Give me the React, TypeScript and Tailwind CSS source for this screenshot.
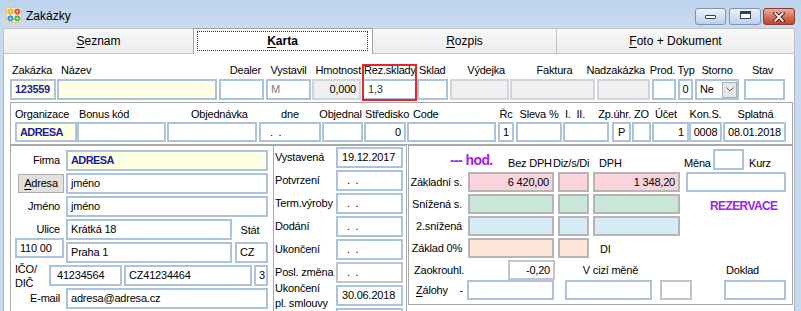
import type { ReactNode } from 'react'

type Tone = 'blue' | 'yellow' | 'gray' | 'plain' | 'pink' | 'green' | 'sky' | 'peach'

const tones: Record<Tone, string> = {
  blue: 'bg-white border-[#adc2db]',
  yellow: 'bg-[#ffffe3] border-[#adc2db]',
  gray: 'bg-[#f0f0f0] border-[#d0d5db]',
  plain: 'bg-white border-[#c4c4c4]',
  pink: 'bg-[#f9d4dd] border-[#b5b5b5]',
  green: 'bg-[#cae6d8] border-[#b5b5b5]',
  sky: 'bg-[#d5ecf7] border-[#b5b5b5]',
  peach: 'bg-[#fde6d7] border-[#b5b5b5]',
}

const Field = ({ tone = 'blue', className = '', children }: { tone?: Tone; className?: string; children?: ReactNode }) => (
  <div className={`flex items-center shrink-0 border-2 px-[3px] overflow-hidden whitespace-nowrap leading-none ${tones[tone]} ${className}`}>
    {children}
  </div>
)

const Col = ({ label, className = '', labelClass = '', children }: { label: ReactNode; className?: string; labelClass?: string; children?: ReactNode }) => (
  <div className={`flex flex-col shrink-0 ${className}`}>
    <div className={`flex h-[13px] leading-[13px] whitespace-nowrap ${labelClass}`}>{label}</div>
    {children}
  </div>
)

const U = ({ children }: { children: ReactNode }) => <span className="underline underline-offset-[2px]">{children}</span>

const AppIcon = () => {
  const gear = (cx: number, cy: number, color: string) => (
    <g>
      <circle cx={cx} cy={cy} r={2.5} fill={color} stroke={color} strokeWidth={1.6} strokeDasharray="1.1 1.1" />
      <circle cx={cx} cy={cy} r={1} fill="#fff" />
    </g>
  )
  return (
    <svg width="16" height="16" viewBox="0 0 16 16" className="ml-[6px] mt-[7px] shrink-0">
      <rect x="0.5" y="0.5" width="15" height="15" rx="1.5" fill="#f6efc4" stroke="#dccf8a" />
      {gear(4.5, 4.6, '#f2a51f')}
      {gear(11.4, 4.6, '#e8432b')}
      {gear(4.5, 11.4, '#2a8de0')}
      {gear(11.4, 11.4, '#3cb54b')}
    </svg>
  )
}

const TitleBar = () => (
  <div className="h-[27px] flex items-start bg-gradient-to-b from-[#bcd2ec] to-[#c9dbf0]">
    <AppIcon />
    <span className="ml-[4px] mt-[8px] text-[12px] leading-[16px]">Zakázky</span>
    <div className="ml-auto mt-[8px] mr-[6px] flex">
      <div className="w-[31px] h-[17px] rounded-[3px] border border-[#7d95b3] bg-gradient-to-b from-[#edf3fa] via-[#d4e1f1] to-[#bed1ea] flex justify-center pt-[6px]">
        <div className="w-[11px] h-[4px] rounded-[1px] border border-[#38414d] bg-white" />
      </div>
      <div className="ml-[3px] w-[32px] h-[17px] rounded-[3px] border border-[#7d95b3] bg-gradient-to-b from-[#edf3fa] via-[#d4e1f1] to-[#bed1ea] flex justify-center pt-[2px]">
        <div className="w-[11px] h-[8px] border border-t-[3px] border-[#38414d] bg-white" />
      </div>
      <div className="ml-[2px] w-[32px] h-[17px] rounded-[3px] border border-[#8a3a2b] bg-gradient-to-b from-[#eab0a2] via-[#d6735d] to-[#c2432c] flex justify-center items-center">
        <svg width="12" height="10" viewBox="0 0 12 10">
          <path d="M2.2 1.2 L9.8 8.8 M9.8 1.2 L2.2 8.8" stroke="#4a1a12" strokeWidth="3.6" strokeLinecap="square" />
          <path d="M2.2 1.2 L9.8 8.8 M9.8 1.2 L2.2 8.8" stroke="#fff" strokeWidth="1.8" strokeLinecap="square" />
        </svg>
      </div>
    </div>
  </div>
)

const Tabs = () => (
  <div className="h-[27px] flex items-end text-[12px]">
    <div className="w-[190px] h-[26px] border-l border-t border-b border-[#c3c3c3] bg-gradient-to-b from-[#f8f8f8] to-[#ececec] flex items-center justify-center">
      <span><U>S</U>eznam</span>
    </div>
    <div className="w-[180px] h-[26px] border-l border-r border-t border-[#a3a3a3] bg-white flex pt-[2px] pl-[3px] pr-[4px] pb-[3px]">
      <div className="flex-1 border border-dotted border-[#333] flex items-center justify-center font-bold">
        <span><U>K</U>arta</span>
      </div>
    </div>
    <div className="w-[183px] h-[26px] border-t border-b border-[#c3c3c3] bg-gradient-to-b from-[#f8f8f8] to-[#ececec] flex items-center justify-center">
      <span><U>R</U>ozpis</span>
    </div>
    <div className="flex-1 h-[26px] border border-[#c3c3c3] bg-gradient-to-b from-[#f8f8f8] to-[#ececec] flex items-center justify-center">
      <span><U>F</U>oto + Dokument</span>
    </div>
  </div>
)

const TopRow = () => (
  <div className="flex pl-[6px] pt-[10px]">
    <Col className="w-[46px]" label="Zakázka" labelClass="pl-[2px]">
      <Field tone="yellow" className="h-[21px] mt-[2px] font-bold text-[#1b1ba6] tracking-[-0.3px]">123559</Field>
    </Col>
    <Col className="w-[160px] ml-px" label="Název" labelClass="pl-[4px]">
      <Field tone="yellow" className="h-[21px] mt-[2px]" />
    </Col>
    <Col className="w-[45px] ml-[2px]" label="Dealer" labelClass="justify-end pr-[3px]">
      <Field className="h-[21px] mt-[2px]" />
    </Col>
    <Col className="w-[45px] ml-[2px]" label="Vystavil" labelClass="justify-center">
      <Field className="h-[21px] mt-[2px] text-[#7a7a7a]">M</Field>
    </Col>
    <Col className="w-[49px] ml-px" label="Hmotnost" labelClass="justify-end">
      <Field tone="gray" className="h-[21px] mt-[2px] justify-end">0,000</Field>
    </Col>
    <div className="relative w-[55px] ml-px shrink-0">
      <Col label="Rez.sklady" labelClass="pl-[2px]">
        <Field className="h-[21px] mt-[2px] text-[#333] pl-[4px]">1,3</Field>
      </Col>
      <div className="absolute inset-0 -bottom-px border-2 border-[#e2282b]" />
    </div>
    <Col className="w-[31px]" label="Sklad" labelClass="pl-[2px]">
      <Field className="h-[21px] mt-[2px]" />
    </Col>
    <Col className="w-[59px] ml-[2px]" label="Výdejka" labelClass="justify-end pr-[4px]">
      <Field tone="gray" className="h-[21px] mt-[2px]" />
    </Col>
    <Col className="w-[85px] ml-px" label="Faktura" labelClass="justify-center pl-[4px]">
      <Field tone="gray" className="h-[21px] mt-[2px]" />
    </Col>
    <Col className="w-[53px] ml-[2px]" label="Nadzakázka" labelClass="justify-end pr-[5px]">
      <Field tone="gray" className="h-[21px] mt-[2px]" />
    </Col>
    <Col className="w-[24px] ml-[2px]" label="Prod." labelClass="justify-center pr-[3px]">
      <Field className="h-[21px] mt-[2px]" />
    </Col>
    <Col className="w-[15px] ml-[2px]" label="Typ" labelClass="justify-center pl-px">
      <Field className="h-[21px] mt-[2px] justify-center px-0">0</Field>
    </Col>
    <Col className="w-[44px] ml-[2px]" label="Storno" labelClass="justify-center">
      <Field className="h-[21px] mt-[2px] pl-[3px] pr-0">
        <span>Ne</span>
        <div className="ml-auto w-[15px] h-[16px] bg-[#e6e6e6] border border-[#adadad] flex items-center justify-center">
          <svg width="8" height="5" viewBox="0 0 8 5">
            <path d="M0.5 0.5 L4 4 L7.5 0.5" fill="none" stroke="#606060" strokeWidth="1" />
          </svg>
        </div>
      </Field>
    </Col>
    <Col className="w-[41px] ml-[5px]" label="Stav" labelClass="justify-center pr-[4px]">
      <Field className="h-[21px] mt-[2px]" />
    </Col>
  </div>
)

const OrderRow = () => (
  <div className="ml-[6px] mt-[2px] w-[783px] h-[43px] border border-[#a9a9a9] flex pl-[4px] pt-[5px]">
    <Col className="w-[62px]" label="Organizace">
      <Field tone="yellow" className="h-[20px] mt-px font-bold text-[#1b1ba6] tracking-[-0.6px]">ADRESA</Field>
    </Col>
    <Col className="w-[89px]" label="Bonus kód" labelClass="pl-[2px]">
      <Field className="h-[20px] mt-px" />
    </Col>
    <Col className="w-[90px] ml-px" label="Objednávka" labelClass="pl-[24px]">
      <Field className="h-[20px] mt-px" />
    </Col>
    <Col className="w-[62px] ml-[2px]" label="dne" labelClass="justify-center">
      <Field className="h-[20px] mt-px pl-[9px] whitespace-pre">.  .</Field>
    </Col>
    <Col className="w-[41px] ml-px" label="Objednal" labelClass="justify-center pr-[4px]">
      <Field className="h-[20px] mt-px" />
    </Col>
    <Col className="w-[42px] ml-px" label="Středisko" labelClass="pl-px">
      <Field className="h-[20px] mt-px justify-end">0</Field>
    </Col>
    <Col className="w-[89px] ml-px" label="Code" labelClass="pl-[6px]">
      <Field className="h-[20px] mt-px" />
    </Col>
    <Col className="w-[16px] ml-[2px]" label="Řc" labelClass="justify-center">
      <Field className="h-[20px] mt-px justify-center px-0">1</Field>
    </Col>
    <Col className="w-[46px] ml-[2px]" label="Sleva %" labelClass="justify-center">
      <Field className="h-[20px] mt-px" />
    </Col>
    <Col className="w-[46px] ml-px" label={<span className="whitespace-pre">I.  II.</span>} labelClass="pl-[2px]">
      <Field className="h-[20px] mt-px" />
    </Col>
    <Col className="w-[19px] ml-[3px]" label="Zp.úhr." labelClass="justify-end">
      <Field className="h-[20px] mt-px justify-center px-0">P</Field>
    </Col>
    <Col className="w-[19px] ml-px" label="ZO" labelClass="justify-center">
      <Field className="h-[20px] mt-px" />
    </Col>
    <Col className="w-[37px] ml-px" label="Účet" labelClass="pl-[3px]">
      <Field className="h-[20px] mt-px justify-end">1</Field>
    </Col>
    <Col className="w-[33px]" label="Kon.S." labelClass="justify-center">
      <Field className="h-[20px] mt-px justify-center px-0">0008</Field>
    </Col>
    <Col className="w-[63px] ml-px" label="Splatná" labelClass="justify-center pl-[2px]">
      <Field className="h-[20px] mt-px justify-center px-0">08.01.2018</Field>
    </Col>
  </div>
)

const Row = ({ className = '', children }: { className?: string; children: ReactNode }) => (
  <div className={`flex items-center h-[21px] mb-[2px] ${className}`}>{children}</div>
)

const CustomerPanel = () => (
  <div className="w-[263px] h-[170px] shrink-0 border-l border-t border-[#a9a9a9] pt-[4px]">
    <Row>
      <div className="w-[52px] text-right pr-[3px]">Firma</div>
      <Field tone="yellow" className="ml-[3px] w-[202px] h-[21px] font-bold text-[#1b1ba6] tracking-[-0.6px]">ADRESA</Field>
    </Row>
    <Row>
      <div className="ml-[7px] w-[46px] h-[19px] bg-[#e1e1e1] border border-[#acacac] flex items-center justify-center">
        <span><U>A</U>dresa</span>
      </div>
      <Field className="ml-[2px] w-[202px] h-[21px]">jméno</Field>
    </Row>
    <Row>
      <div className="w-[52px] text-right pr-[3px]">Jméno</div>
      <Field className="ml-[3px] w-[202px] h-[21px]">jméno</Field>
    </Row>
    <Row>
      <div className="w-[52px] text-right pr-[3px]">Ulice</div>
      <Field className="ml-[3px] w-[166px] h-[21px]">Krátká 18</Field>
      <div className="w-[36px] text-center pt-[2px]">Stát</div>
    </Row>
    <Row className="items-start">
      <Field className="ml-[4px] -mt-[4px] w-[49px] h-[20px]">110 00</Field>
      <Field className="ml-[2px] w-[166px] h-[21px]">Praha 1</Field>
      <Field className="ml-[3px] w-[33px] h-[21px]">CZ</Field>
    </Row>
    <Row>
      <div className="w-[38px] pl-[4px] leading-[14px]">IČO/<br />DIČ</div>
      <Field className="w-[73px] h-[21px] pl-[6px]">41234564</Field>
      <Field className="ml-[2px] w-[128px] h-[21px]">CZ41234464</Field>
      <Field className="ml-[2px] w-[14px] h-[21px] px-[1px]">3</Field>
    </Row>
    <Row>
      <div className="w-[52px] text-right pr-[3px]">E-mail</div>
      <Field className="ml-[3px] w-[202px] h-[21px]">adresa@adresa.cz</Field>
    </Row>
    <Row>
      <Field className="ml-[55px] w-[202px] h-[21px]" />
    </Row>
  </div>
)

const DateRow = ({ label, tone = 'blue', children }: { label: ReactNode; tone?: Tone; children?: ReactNode }) => (
  <Row>
    <div className="w-[62px] pl-[1px] whitespace-nowrap">{label}</div>
    <Field tone={tone} className="w-[67px] h-[21px] pl-[4px]">{children}</Field>
  </Row>
)

const Empty = () => <span className="pl-[5px] whitespace-pre">.  .</span>

const DatesPanel = () => (
  <div className="w-[134px] h-[170px] shrink-0 border-l border-t border-r border-[#a9a9a9] pt-px">
    <DateRow label="Vystavená">19.12.2017</DateRow>
    <DateRow label="Potvrzení"><Empty /></DateRow>
    <DateRow label="Term.výroby"><Empty /></DateRow>
    <DateRow label="Dodání"><Empty /></DateRow>
    <DateRow label="Ukončení"><Empty /></DateRow>
    <DateRow label="Posl. změna" tone="plain"><Empty /></DateRow>
    <DateRow label={<div className="leading-[15px]">Ukončení<br />pl. smlouvy</div>}>30.06.2018</DateRow>
    <DateRow label="" />
  </div>
)

const MoneyRow = ({ label, tone, base, vat, right }: { label: string; tone: Tone; base?: string; vat?: ReactNode; right?: ReactNode }) => (
  <div className="flex items-center h-[20px] mb-[2px]">
    <div className="w-[55px] text-right pr-[2px] whitespace-nowrap">{label}</div>
    <Field tone={tone} className="ml-[4px] w-[86px] h-[20px] justify-end">{base}</Field>
    <Field tone={tone} className="ml-[4px] w-[31px] h-[20px]" />
    {vat}
    <div className="ml-[6px] w-[100px] h-[20px] flex items-center">{right}</div>
  </div>
)

const PricePanel = () => (
  <div className="ml-px w-[385px] h-[160px] shrink-0 border border-[#a9a9a9]">
    <div className="flex items-end h-[26px]">
      <div className="w-[99px] pl-[41px] mb-[4px] text-[14px] leading-[16px] font-bold text-[#a020f0] tracking-[-0.6px] whitespace-nowrap">--- hod.</div>
      <div className="w-[45px] mb-[2px] leading-[13px] whitespace-nowrap">Bez DPH</div>
      <div className="w-[43px] mb-[2px] leading-[13px] whitespace-nowrap">Diz/s/Di</div>
      <div className="w-[88px] mb-[2px] leading-[13px] pl-[3px]">DPH</div>
      <div className="w-[29px] mb-[2px] leading-[13px]">Měna</div>
      <Field className="w-[31px] h-[21px] mb-[2px]" />
      <div className="ml-[5px] mb-[2px] leading-[13px]">Kurz</div>
    </div>
    <MoneyRow
      label="Základní s."
      tone="pink"
      base="6 420,00"
      vat={<Field tone="pink" className="ml-[4px] w-[87px] h-[20px] justify-end">1 348,20</Field>}
      right={<Field className="w-[100px] h-[20px]" />}
    />
    <MoneyRow
      label="Snížená s."
      tone="green"
      vat={<Field tone="green" className="ml-[4px] w-[87px] h-[20px]" />}
      right={<span className="pl-[24px] pt-[4px] text-[12px] font-bold text-[#a020f0] tracking-[-0.6px]">REZERVACE</span>}
    />
    <MoneyRow
      label="2.snížená"
      tone="sky"
      vat={<Field tone="sky" className="ml-[4px] w-[87px] h-[20px]" />}
    />
    <MoneyRow
      label="Základ 0%"
      tone="peach"
      vat={<div className="ml-[4px] w-[87px] pl-[7px] pt-[2px]">DI</div>}
    />
    <div className="flex items-center h-[20px] mt-[2px]">
      <div className="w-[55px] text-right whitespace-nowrap">Zaokrouhl.</div>
      <Field tone="plain" className="ml-[44px] w-[47px] h-[20px] justify-end">-0,20</Field>
      <div className="ml-[10px] w-[87px] text-center pl-[4px] whitespace-nowrap">V cizí měně</div>
      <div className="ml-[72px] w-[62px] pl-[2px]">Doklad</div>
    </div>
    <div className="flex items-center h-[20px]">
      <div className="w-[55px] flex pl-[7px] pr-[1px]">
        <span><U>Z</U>álohy</span>
        <span className="ml-auto">-</span>
      </div>
      <Field className="ml-[3px] w-[87px] h-[20px]" />
      <Field className="ml-[11px] w-[87px] h-[20px]" />
      <Field tone="plain" className="ml-[8px] w-[32px] h-[20px]" />
      <Field className="ml-[32px] w-[62px] h-[20px]" />
    </div>
  </div>
)

export default function App() {
  return (
    <div className="w-[801px] h-[311px] overflow-hidden bg-[#c8daef] font-['Liberation_Sans',Arial,sans-serif] text-[11px] text-black">
      <TitleBar />
      <div className="ml-[3px] w-[792px]">
        <Tabs />
        <div className="h-[257px] overflow-hidden bg-white border-l border-r border-[#aab4c0] tracking-[-0.2px]">
          <TopRow />
          <OrderRow />
          <div className="flex ml-[6px]">
            <CustomerPanel />
            <DatesPanel />
            <PricePanel />
          </div>
        </div>
      </div>
    </div>
  )
}
